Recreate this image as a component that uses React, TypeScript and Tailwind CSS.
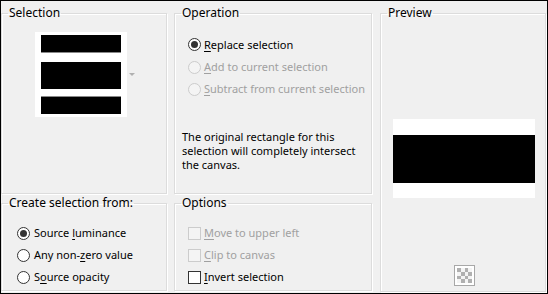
const font = { fontFamily: '"Noto Sans", "Liberation Sans", sans-serif' };

const Radio = ({
  checked,
  disabled,
}: {
  checked?: boolean;
  disabled?: boolean;
}) => (
  <span
    className={
      "flex h-[13px] w-[13px] shrink-0 items-center justify-center rounded-full border " +
      (disabled ? "border-[#cccccc] bg-[#f4f4f4]" : "border-[#333333] bg-white")
    }
  >
    {checked && <span className="h-[7px] w-[7px] rounded-full bg-[#333333]" />}
  </span>
);

const Check = ({ disabled }: { disabled?: boolean }) => (
  <span
    className={
      "h-[13px] w-[13px] shrink-0 border " +
      (disabled ? "border-[#cccccc] bg-[#f4f4f4]" : "border-[#333333] bg-white")
    }
  />
);

// text with one underlined access key
const Label = ({
  pre,
  u,
  post,
  disabled,
}: {
  pre?: string;
  u: string;
  post: string;
  disabled?: boolean;
}) => (
  <span className={"whitespace-nowrap " + (disabled ? "text-[#a0a0a0]" : "text-black")}>
    {pre}
    <span className="underline underline-offset-2">{u}</span>
    {post}
  </span>
);

const Group = ({
  title,
  className,
  children,
}: {
  title: string;
  className: string;
  children?: React.ReactNode;
}) => (
  <fieldset
    className={
      "min-w-0 border border-[#dcdcdc] shadow-[inset_1px_1px_0_#ffffff,1px_1px_0_#ffffff] " +
      className
    }
  >
    <legend className="ml-[6px] px-[1px] text-[12px] leading-[16px] text-black">{title}</legend>
    {children}
  </fieldset>
);

export default function App() {
  return (
    <div
      className="h-[294px] w-[548px] overflow-hidden border border-black bg-[#f0f0f0] text-[11px] leading-[16px] text-black"
      style={font}
    >
      <div className="flex">
        {/* left column */}
        <div className="flex w-[166px] shrink-0 flex-col">
          <Group title="Selection" className="mt-[4px] h-[189px]">
            <div className="ml-[33px] mt-[11px] flex items-start">
              <div className="flex h-[85px] w-[92px] flex-col bg-white px-[6px] pt-[3px]">
                <div className="h-[18px] border-b border-[#888888] bg-black" />
                <div className="mt-[9px] h-[27px] bg-black" />
                <div className="mt-[7px] h-[18px] border-t border-[#888888] bg-black" />
              </div>
              <svg width="6" height="4" className="ml-[2px] mt-[41px]">
                <path d="M0 0 L6 0 L3 3 Z" fill="#b0b0b0" />
              </svg>
            </div>
          </Group>
          <Group title="Create selection from:" className="mt-[1px] h-[96px]">
            <div className="mt-[11px] flex flex-col pl-[15px]">
              <div className="flex h-[22px] items-center gap-[4px]">
                <Radio checked />
                <Label pre="Source " u="l" post="uminance" />
              </div>
              <div className="flex h-[22px] items-center gap-[4px]">
                <Radio />
                <Label pre="Any non-" u="z" post="ero value" />
              </div>
              <div className="flex h-[22px] items-center gap-[4px]">
                <Radio />
                <Label pre="S" u="o" post="urce opacity" />
              </div>
            </div>
          </Group>
        </div>

        {/* middle column */}
        <div className="ml-[7px] flex w-[198px] shrink-0 flex-col">
          <Group title="Operation" className="mt-[4px] h-[189px]">
            <div className="mt-[12px] flex flex-col pl-[13px]">
              <div className="flex h-[23px] items-center gap-[3px]">
                <Radio checked />
                <Label u="R" post="eplace selection" />
              </div>
              <div className="flex h-[22px] items-center gap-[3px]">
                <Radio disabled />
                <Label u="A" post="dd to current selection" disabled />
              </div>
              <div className="flex h-[22px] items-center gap-[3px]">
                <Radio disabled />
                <Label u="S" post="ubtract from current selection" disabled />
              </div>
            </div>
            <p className="mt-[30px] pl-[7px] pr-[4px] leading-[14px]">
              The original rectangle for this selection will completely intersect the canvas.
            </p>
          </Group>
          <Group title="Options" className="mt-[1px] h-[96px]">
            <div className="mt-[11px] flex flex-col pl-[13px]">
              <div className="flex h-[22px] items-center gap-[3px]">
                <Check disabled />
                <Label u="M" post="ove to upper left" disabled />
              </div>
              <div className="flex h-[22px] items-center gap-[3px]">
                <Check disabled />
                <Label u="C" post="lip to canvas" disabled />
              </div>
              <div className="flex h-[22px] items-center gap-[3px]">
                <Check />
                <Label u="I" post="nvert selection" />
              </div>
            </div>
          </Group>
        </div>

        {/* right column */}
        <Group title="Preview" className="ml-[8px] mt-[4px] h-[287px] w-[166px] shrink-0">
          <div className="flex flex-col items-start">
            <div className="ml-[12px] mt-[98px] flex h-[79px] w-[142px] flex-col bg-white pt-[16px]">
              <div className="h-[48px] bg-black" />
            </div>
            <div className="ml-[73px] mt-[67px] grid h-[21px] w-[21px] grid-cols-4 grid-rows-4 border border-[#a8a8a8] bg-white p-[2px]">
              {Array.from({ length: 16 }).map((_, i) => (
                <span
                  key={i}
                  className={
                    (Math.floor(i / 4) + i) % 2 === 0 ? "bg-[#b0b0b0]" : "bg-[#f4f4f4]"
                  }
                />
              ))}
            </div>
          </div>
        </Group>
      </div>
    </div>
  );
}
